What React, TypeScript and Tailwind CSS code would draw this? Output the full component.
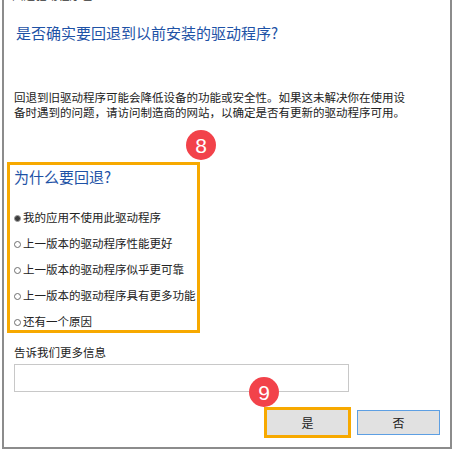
import React from "react";

const reasons = [
  "我的应用不使用此驱动程序",
  "上一版本的驱动程序性能更好",
  "上一版本的驱动程序似乎更可靠",
  "上一版本的驱动程序具有更多功能",
  "还有一个原因",
];

const font = { fontFamily: '"Noto Sans CJK SC", "Noto Sans", sans-serif' };

const Badge: React.FC<{ n: number; className: string }> = ({ n, className }) => (
  <div
    className={`absolute w-[30px] h-[30px] rounded-full bg-[#f2424a] text-white flex items-center justify-center text-[21px] leading-none ${className}`}
    style={{ fontFamily: '"Liberation Sans", Arial, sans-serif' }}
  >
    {n}
  </div>
);

const Radio: React.FC<{ checked?: boolean }> = ({ checked }) =>
  checked ? (
    <span className="w-[7px] h-[7px] rounded-full bg-[#3c3c3c] border border-[#9a9a9a] shrink-0" />
  ) : (
    <span className="w-[7px] h-[7px] rounded-full bg-white border border-[#6e6e6e] shrink-0" />
  );

const App: React.FC = () => {
  return (
    <div className="relative w-[456px] h-[450px] bg-white overflow-hidden" style={font}>
      <div className="ml-[2px] w-[450px] h-[449px] border-l-2 border-r-2 border-b-2 border-[#8c8c8c] flex flex-col">
        {/* clipped title from above */}
        <div className="h-[4px] overflow-hidden pl-[8px]">
          <div className="-mt-[12px] text-[11.5px] leading-[15px] text-[#333]">
            回退驱动程序包
          </div>
        </div>

        <h1 className="mt-[19px] ml-[12px] text-[15px] leading-[20px] text-[#1e52a6]">
          是否确实要回退到以前安装的驱动程序?
        </h1>

        <p className="mt-[47px] ml-[10px] text-[11.5px] leading-[15px] text-[#222]">
          回退到旧驱动程序可能会降低设备的功能或安全性。如果这未解决你在使用设
          <br />
          备时遇到的问题，请访问制造商的网站，以确定是否有更新的驱动程序可用。
        </p>

        <div className="mt-[42px] ml-[3px] w-[193px] h-[171px] border-[3px] border-[#f7a900] pl-[4px] pt-[2px]">
          <h2 className="text-[15px] leading-[20px] text-[#1e52a6]">为什么要回退?</h2>
          <div className="mt-[23px] flex flex-col gap-[10px]">
            {reasons.map((r, i) => (
              <label key={r} className="flex items-center gap-[2px] h-[16px] text-[11.5px] text-[#222]">
                <Radio checked={i === 0} />
                <span>{r}</span>
              </label>
            ))}
          </div>
        </div>

        <div className="mt-[11px] ml-[10px] text-[11.5px] leading-[16px] text-[#222]">
          告诉我们更多信息
        </div>
        <div className="mt-[4px] ml-[10px] w-[335px] h-[28px] border border-[#c8c8c8] bg-white" />

        <div className="mt-[15px] flex items-center justify-end gap-[6px] pr-[10px]">
          <div className="w-[87px] h-[31px] border-[3px] border-[#f7a900] bg-[#e1e1e1] flex items-center justify-center text-[12px] text-[#222]">
            是
          </div>
          <div className="w-[83px] h-[25px] border border-[#5d9fe3] bg-[#e1e1e1] flex items-center justify-center text-[12px] text-[#222]">
            否
          </div>
        </div>
      </div>

      <Badge n={8} className="left-[186px] top-[130px]" />
      <Badge n={9} className="left-[249px] top-[377px]" />
    </div>
  );
};

export default App;
